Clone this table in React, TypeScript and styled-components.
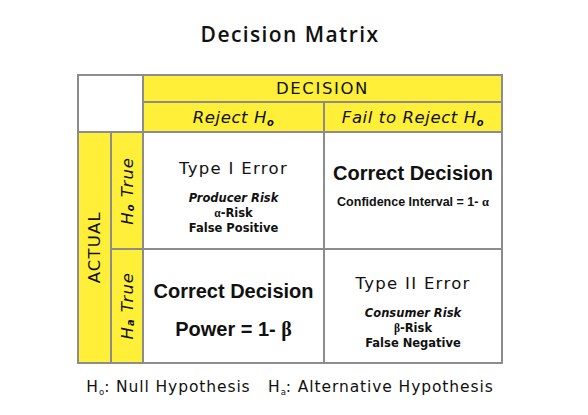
import styled, { createGlobalStyle } from 'styled-components';

const GlobalStyle = createGlobalStyle`
  body {
    margin: 0;
    background: #ffffff;
  }
`;

const Page = styled.div`
  display: flex;
  flex-direction: column;
  align-items: center;
  width: 426px;
  margin-left: 77px;
  padding-top: 20px;
  color: #111;
`;

const Title = styled.h1`
  margin: 0 0 26px;
  font-family: "Open Sans", sans-serif;
  font-weight: 600;
  font-size: 21px;
  line-height: 28px;
  letter-spacing: 1.4px;
`;

const Matrix = styled.div`
  display: grid;
  grid-template-columns: 31px 30px 179px 176px;
  grid-template-rows: 25px 28px 115px 112px;
  gap: 2px;
  padding: 2px;
  background: #8c8c8c;
`;

const Corner = styled.div`
  grid-column: 1 / 3;
  grid-row: 1 / 3;
  background: #ffffff;
`;

const Band = styled.div<{ $col: string; $row: string; $italic?: boolean }>`
  grid-column: ${(p) => p.$col};
  grid-row: ${(p) => p.$row};
  display: flex;
  align-items: center;
  justify-content: center;
  background: #ffef38;
  font-family: "DejaVu Sans", Verdana, sans-serif;
  font-size: 16.5px;
  font-style: ${(p) => (p.$italic ? 'italic' : 'normal')};
  letter-spacing: ${(p) => (p.$italic ? '0.6px' : '1.6px')};
  white-space: nowrap;
`;

const Vertical = styled.span<{ $spacing: number }>`
  writing-mode: vertical-rl;
  transform: rotate(180deg);
  letter-spacing: ${(p) => p.$spacing}px;
`;

const Sub = styled.sub`
  font-size: 60%;
  font-weight: bold;
  vertical-align: -0.3em;
  line-height: 0;
`;

const Outcome = styled.div<{ $col: number; $row: number; $top: number }>`
  grid-column: ${(p) => p.$col};
  grid-row: ${(p) => p.$row};
  display: flex;
  flex-direction: column;
  align-items: center;
  padding-top: ${(p) => p.$top}px;
  background: #ffffff;
  white-space: nowrap;
`;

const ErrorName = styled.div`
  margin-bottom: 13px;
  font-family: "DejaVu Sans", Verdana, sans-serif;
  font-size: 16.5px;
  line-height: 19px;
  letter-spacing: 1.3px;
`;

const Detail = styled.div<{ $italic?: boolean }>`
  font-family: "DejaVu Sans", Verdana, sans-serif;
  font-size: 11.5px;
  line-height: 15px;
  font-weight: bold;
  font-style: ${(p) => (p.$italic ? 'italic' : 'normal')};
`;

const Verdict = styled.div<{ $gap: number }>`
  margin-bottom: ${(p) => p.$gap}px;
  font-family: "Liberation Sans", Arial, sans-serif;
  font-weight: bold;
  font-size: 20px;
  line-height: 23px;
`;

const Formula = styled.div<{ $size: number }>`
  font-family: "Liberation Sans", Arial, sans-serif;
  font-weight: bold;
  font-size: ${(p) => p.$size}px;
  line-height: ${(p) => p.$size + 3}px;
`;

const Greek = styled.span`
  font-family: "Liberation Serif", "Times New Roman", serif;
  font-weight: bold;
`;

const Legend = styled.div`
  margin-top: 14px;
  font-family: "DejaVu Sans", Verdana, sans-serif;
  font-size: 15.5px;
  line-height: 18px;
  letter-spacing: 0.9px;
  white-space: pre;
`;

const LegendSub = styled.sub`
  font-size: 55%;
  vertical-align: -0.3em;
  line-height: 0;
  letter-spacing: 0;
`;

export default function App() {
  return (
    <>
      <GlobalStyle />
      <Page>
        <Title>Decision Matrix</Title>
        <Matrix>
          <Corner />
          <Band $col="3 / 5" $row="1">DECISION</Band>
          <Band $col="3" $row="2" $italic>
            <span>
              Reject H<Sub>o</Sub>
            </span>
          </Band>
          <Band $col="4" $row="2" $italic>
            <span>
              Fail to Reject H<Sub>o</Sub>
            </span>
          </Band>
          <Band $col="1" $row="3 / 5">
            <Vertical $spacing={1.2}>ACTUAL</Vertical>
          </Band>
          <Band $col="2" $row="3" $italic>
            <Vertical $spacing={1}>
              H<Sub>o</Sub> True
            </Vertical>
          </Band>
          <Band $col="2" $row="4" $italic>
            <Vertical $spacing={1}>
              H<Sub>a</Sub> True
            </Vertical>
          </Band>

          <Outcome $col={3} $row={3} $top={26}>
            <ErrorName>Type I Error</ErrorName>
            <Detail $italic>Producer Risk</Detail>
            <Detail>
              <Greek>α</Greek>-Risk
            </Detail>
            <Detail>False Positive</Detail>
          </Outcome>
          <Outcome $col={4} $row={3} $top={29}>
            <Verdict $gap={10}>Correct Decision</Verdict>
            <Formula $size={12.5}>
              Confidence Interval = 1- <Greek>α</Greek>
            </Formula>
          </Outcome>
          <Outcome $col={3} $row={4} $top={30}>
            <Verdict $gap={15}>Correct Decision</Verdict>
            <Formula $size={20}>
              Power = 1- <Greek>β</Greek>
            </Formula>
          </Outcome>
          <Outcome $col={4} $row={4} $top={24}>
            <ErrorName>Type II Error</ErrorName>
            <Detail $italic>Consumer Risk</Detail>
            <Detail>
              <Greek>β</Greek>-Risk
            </Detail>
            <Detail>False Negative</Detail>
          </Outcome>
        </Matrix>
        <Legend>
          H<LegendSub>o</LegendSub>: Null Hypothesis   H<LegendSub>a</LegendSub>: Alternative Hypothesis
        </Legend>
      </Page>
    </>
  );
}
